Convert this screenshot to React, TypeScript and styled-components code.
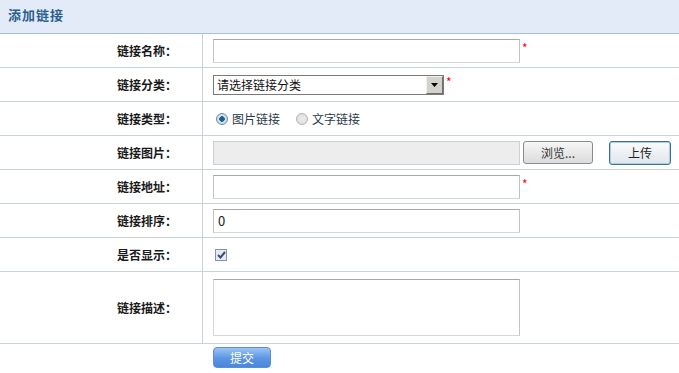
import { styled, createGlobalStyle } from "styled-components";

const Global = createGlobalStyle`
  html, body {
    margin: 0;
    padding: 0;
    background: #fff;
  }
  body {
    font-family: "Noto Sans CJK SC", "Liberation Sans", sans-serif;
    font-size: 12px;
    color: #333;
  }
`;

type Field = {
  label: string;
  tall?: boolean;
  content: React.ReactNode;
};

export default function App() {
  const fields: Field[] = [
    {
      label: "链接名称：",
      content: (
        <>
          <TextInput type="text" />
          <Req>*</Req>
        </>
      ),
    },
    {
      label: "链接分类：",
      content: (
        <>
          <Select>
            <SelectText>请选择链接分类</SelectText>
            <SelectBtn>
              <svg width="7" height="4" viewBox="0 0 7 4">
                <path d="M0 0h7L3.5 4z" fill="#000" />
              </svg>
            </SelectBtn>
          </Select>
          <Req>*</Req>
        </>
      ),
    },
    {
      label: "链接类型：",
      content: (
        <>
          <Choice>
            <Radio $checked />
            图片链接
          </Choice>
          <Choice>
            <Radio />
            文字链接
          </Choice>
        </>
      ),
    },
    {
      label: "链接图片：",
      content: (
        <>
          <TextInput type="text" disabled />
          <BrowseBtn>浏览...</BrowseBtn>
          <UploadBtn>上传</UploadBtn>
        </>
      ),
    },
    {
      label: "链接地址：",
      content: (
        <>
          <TextInput type="text" />
          <Req>*</Req>
        </>
      ),
    },
    {
      label: "链接排序：",
      content: <TextInput type="text" defaultValue="0" />,
    },
    {
      label: "是否显示：",
      content: (
        <Check>
          <svg width="9" height="8" viewBox="0 0 9 8">
            <path d="M1 4l2.5 2.5L8 1" stroke="#3d4a6b" strokeWidth="2" fill="none" />
          </svg>
        </Check>
      ),
    },
    {
      label: "链接描述：",
      tall: true,
      content: <TextArea />,
    },
  ];

  return (
    <Page>
      <Global />
      <Header>添加链接</Header>
      {fields.map((f) => (
        <Row key={f.label} $tall={f.tall}>
          <Label>{f.label}</Label>
          <Value>{f.content}</Value>
        </Row>
      ))}
      <Footer>
        <Submit>提交</Submit>
      </Footer>
    </Page>
  );
}

const Page = styled.div`
  width: 679px;
`;

const Header = styled.div`
  height: 33px;
  line-height: 29px;
  padding-left: 8px;
  background: #e3ebf8;
  border-bottom: 1px solid #a9c1d3;
  color: #2a5f8e;
  font-weight: bold;
  font-size: 13px;
  letter-spacing: 1px;
`;

const Row = styled.div<{ $tall?: boolean }>`
  display: grid;
  grid-template-columns: 203px 1fr;
  height: ${(p) => (p.$tall ? 71 : 33)}px;
  border-bottom: 1px solid #c6d3dc;
`;

const Label = styled.div`
  display: flex;
  align-items: center;
  justify-content: flex-end;
  padding-right: 25px;
  border-right: 1px solid #c6d3dc;
  font-weight: bold;
  color: #1a1a1a;
`;

const Value = styled.div`
  display: flex;
  align-items: center;
  padding-left: 10px;
`;

const TextInput = styled.input`
  box-sizing: border-box;
  width: 307px;
  height: 24px;
  margin: 0;
  padding: 0 4px;
  border: 1px solid #d6d6d6;
  border-top-color: #a8a8a8;
  border-left-color: #c4c4c4;
  border-right-color: #c4c4c4;
  font-family: inherit;
  font-size: 13px;
  color: #222;
  background: #fff;
  outline: none;

  &:disabled {
    background: #ededed;
    border-color: #cfcfcf;
  }
`;

const TextArea = styled.textarea`
  box-sizing: border-box;
  width: 307px;
  height: 57px;
  margin: 0;
  resize: none;
  border: 1px solid #d6d6d6;
  border-top-color: #a8a8a8;
  border-right-color: #c4c4c4;
  outline: none;
`;

const Req = styled.span`
  align-self: flex-start;
  margin-top: 8px;
  margin-left: 2px;
  color: #ff0000;
  font-size: 12px;
  line-height: 12px;
`;

const Select = styled.div`
  box-sizing: border-box;
  display: flex;
  align-items: stretch;
  width: 231px;
  height: 20px;
  border: 1px solid #7a7a7a;
  background: #fff;
`;

const SelectText = styled.span`
  flex: 1;
  line-height: 18px;
  padding-left: 3px;
  font-size: 12px;
  color: #111;
`;

const SelectBtn = styled.span`
  box-sizing: border-box;
  width: 17px;
  display: flex;
  align-items: center;
  justify-content: center;
  background: #d4d2cc;
  border: 1px solid #6e6e6e;
  border-top-color: #f0f0f0;
  border-left-color: #f0f0f0;
  margin: 0;
`;

const Choice = styled.label`
  display: flex;
  align-items: center;
  gap: 4px;
  margin-left: 3px;
  margin-right: 13px;
  color: #2b3a4a;
  font-size: 12px;
`;

const Radio = styled.span<{ $checked?: boolean }>`
  box-sizing: border-box;
  width: 12px;
  height: 12px;
  border-radius: 50%;
  border: 1px solid ${(p) => (p.$checked ? "#6b8aa6" : "#b4b4b4")};
  background: ${(p) =>
    p.$checked
      ? "radial-gradient(circle, #1f5f8f 0 2.5px, #cfe0ee 3px)"
      : "radial-gradient(circle, #ececec 0, #dcdcdc 100%)"};
`;

const Check = styled.span`
  box-sizing: border-box;
  width: 12px;
  height: 12px;
  margin-left: 2px;
  border: 1px solid #8494b0;
  background: #e6e9f2;
  display: flex;
  align-items: center;
  justify-content: center;
`;

const BrowseBtn = styled.button`
  box-sizing: border-box;
  width: 70px;
  height: 23px;
  margin-left: 3px;
  padding: 0;
  border: 1px solid #8c8c8c;
  border-radius: 3px;
  background: linear-gradient(#f6f6f6, #dcdcdc);
  font-family: inherit;
  font-size: 12px;
  color: #333;
`;

const UploadBtn = styled.button`
  box-sizing: border-box;
  width: 62px;
  height: 24px;
  margin-left: 16px;
  padding: 0;
  border: 1px solid #3f6f92;
  border-radius: 3px;
  box-shadow: inset 0 0 0 1px #a9cde4;
  background: linear-gradient(#fbfbfb, #dfe6eb);
  font-family: inherit;
  font-size: 12px;
  color: #222;
`;

const Footer = styled.div`
  padding: 3px 0 0 213px;
`;

const Submit = styled.button`
  box-sizing: border-box;
  width: 58px;
  height: 21px;
  padding: 0;
  border: 1px solid #5a8fd4;
  border-radius: 4px;
  background: linear-gradient(#9cc4f6, #5b95e2 55%, #4a86da);
  color: #fff;
  font-family: inherit;
  font-size: 12px;
`;
